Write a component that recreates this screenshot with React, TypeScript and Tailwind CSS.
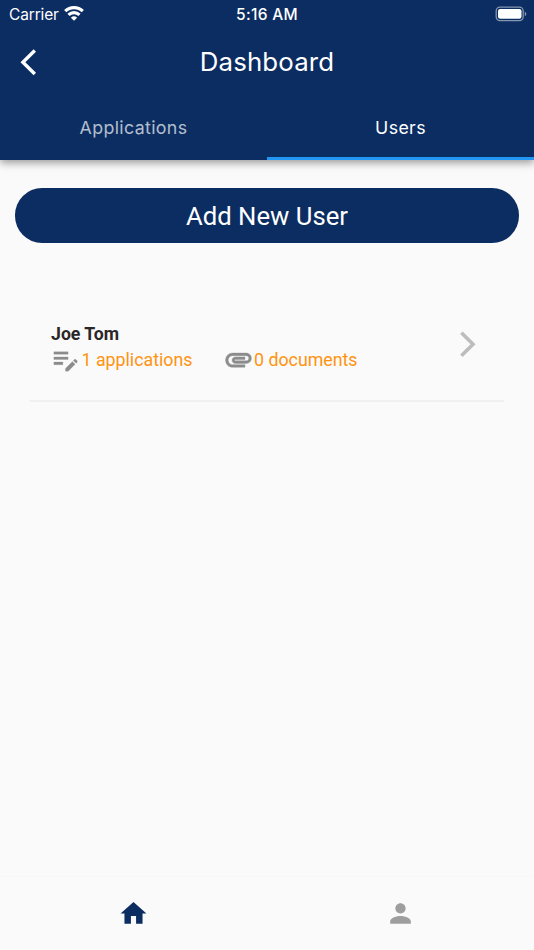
import type { ReactNode } from "react";

const inter = "font-['Inter',sans-serif]";

function Glyph({ d, className }: { d: string; className: string }) {
  return (
    <svg viewBox="0 0 24 24" fill="currentColor" className={className}>
      <path d={d} />
    </svg>
  );
}

function StatusBar() {
  return (
    <div className={`grid h-7 grid-cols-3 items-center text-white ${inter}`}>
      <div className="flex items-center gap-[5px] pl-[9px]">
        <span className="pt-px text-[15.5px] leading-7 tracking-[-0.15px]">Carrier</span>
        <svg viewBox="0 0 20 15" className="-mt-[2px] h-[15px] w-5" fill="none" stroke="currentColor" strokeWidth="3.1">
          <path d="M1.2 5.2a12.6 12.6 0 0 1 17.6 0" />
          <path d="M4.5 8.9a7.9 7.9 0 0 1 11 0" />
          <path d="M10 14.8 6.9 11.8a4.5 4.5 0 0 1 6.2 0Z" fill="currentColor" stroke="none" />
        </svg>
      </div>
      <span className="text-center text-[15.5px] font-medium leading-7 tracking-[0.3px]">5:16 AM</span>
      <div className="flex justify-end pr-[7px]">
        <svg viewBox="0 0 32 16" className="-mt-[2px] h-4 w-8" fill="none">
          <rect x="1.2" y="1.2" width="27" height="13.4" rx="3.8" stroke="#fff" strokeOpacity="0.5" strokeWidth="1.3" />
          <rect x="3" y="3" width="23.5" height="9.8" rx="2.2" fill="#fff" />
          <path d="M29.8 5.5q3 2.4 0 4.8Z" fill="#fff" fillOpacity="0.55" />
        </svg>
      </div>
    </div>
  );
}

function Stat({ icon, children }: { icon: ReactNode; children: ReactNode }) {
  return (
    <div className="flex items-center">
      {icon}
      <span className="text-[17.8px] leading-6">{children}</span>
    </div>
  );
}

export default function App() {
  return (
    <div className="flex h-[950px] w-[534px] flex-col bg-[#fafafa] font-['Roboto',sans-serif]">
      <header className={`z-10 h-40 shrink-0 bg-[#0b2d62] text-white shadow-[0_3px_8px_rgba(0,0,0,0.38)] ${inter}`}>
        <StatusBar />
        <div className="grid h-[68px] grid-cols-[60px_1fr_60px] items-center">
          <svg viewBox="0 0 20 28" className="ml-[19px] h-7 w-5" fill="none" stroke="currentColor" strokeWidth="3.4">
            <path d="M15.8 2.5 3.9 14.2 15.8 26" />
          </svg>
          <h1 className="text-center text-[25.8px] leading-8 tracking-[0.15px]">Dashboard</h1>
        </div>
        <nav className="grid h-16 grid-cols-2 text-center text-[17.8px] leading-[64px] tracking-[0.35px]">
          <span className="text-white/70">Applications</span>
          <span className="h-16 border-b-[3px] border-[#2196f3]">Users</span>
        </nav>
      </header>

      <main className="flex-1">
        <button className="mx-[15px] mt-7 block h-[55px] w-[504px] rounded-[27px] bg-[#0b2d62] text-center text-[25.7px] leading-[56px] text-white">
          Add New User
        </button>
        <section className="mx-[30px] mt-[71px] flex h-[88px] justify-between border-b-2 border-[#f0f0f0]">
          <div className="pl-[21px] pt-2">
            <h2 className="text-[17.7px] font-bold leading-6 text-[#2b2728]">Joe Tom</h2>
            <div className="-mt-[2px] flex text-[#ff9310]">
              <div className="w-[173px]">
                <Stat
                  icon={
                    <Glyph
                      className="-ml-px mr-[0.5px] h-[31px] w-[31px] stroke-current stroke-[0.2px] text-[#8c8c8c]"
                      d="M3 10h11v2H3v-2zm0-2h11V6H3v2zm0 8h7v-2H3v2zm15.01-3.13.71-.71c.39-.39 1.02-.39 1.41 0l.71.71c.39.39.39 1.02 0 1.41l-.71.71-2.12-2.12zm-.71.71-5.3 5.3V21h2.12l5.3-5.3-2.12-2.12z"
                    />
                  }
                >
                  1 applications
                </Stat>
              </div>
              <Stat
                icon={
                  <Glyph
                    className="-ml-px -mt-px h-[31px] w-[31px] stroke-current stroke-[0.3px] text-[#8c8c8c]"
                    d="M2 12.5C2 9.46 4.46 7 7.5 7H18c2.21 0 4 1.79 4 4s-1.79 4-4 4H9.5C8.12 15 7 13.88 7 12.5S8.12 10 9.5 10H17v2H9.41c-.55 0-.55 1 0 1H18c1.1 0 2-.9 2-2s-.9-2-2-2H7.5C5.57 9 4 10.57 4 12.5S5.57 16 7.5 16H17v2H7.5C4.46 18 2 15.54 2 12.5z"
                  />
                }
              >
                0 documents
              </Stat>
            </div>
          </div>
          <svg viewBox="0 0 20 28" className="mr-[27px] mt-4 h-7 w-5" fill="none" stroke="#bdbdbd" strokeWidth="3.6">
            <path d="M4.4 2.8 16 14.3 4.4 25.8" />
          </svg>
        </section>
      </main>

      <footer className="grid h-[74px] shrink-0 grid-cols-2 justify-items-center border-t border-[#f7f7f7] pt-[21px]">
        <Glyph className="h-[31px] w-[31px] text-[#0b2d62]" d="M10 20v-6h4v6h5v-8h3L12 3 2 12h3v8z" />
        <Glyph
          className="h-[31px] w-[31px] text-[#9e9e9e]"
          d="M12 12c2.21 0 4-1.79 4-4s-1.79-4-4-4-4 1.79-4 4 1.79 4 4 4zm0 2c-2.67 0-8 1.34-8 4v2h16v-2c0-2.66-5.33-4-8-4z"
        />
      </footer>
    </div>
  );
}
